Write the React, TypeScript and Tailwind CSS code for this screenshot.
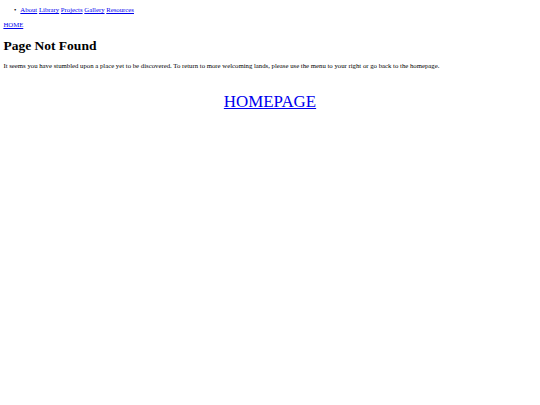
export default function App() {
  const links = ['About', 'Library', 'Projects', 'Gallery', 'Resources']

  return (
    <div className="min-h-[405px] bg-white px-[3.4px] pt-[6px] font-['Liberation_Serif',serif] text-[6.75px] leading-[1.15] text-black">
      <nav>
        <ul className="list-none pl-[10.6px]">
          <li>
            <span className="mr-[4px]">•</span>
            {links.map((link, index) => (
              <span key={link}>
                <a href="#" className="text-[#0000ee] underline">{link}</a>
                {index < links.length - 1 ? ' ' : ''}
              </span>
            ))}
          </li>
        </ul>
      </nav>
      <div className="mt-[7.5px]">
        <a href="#" className="text-[#0000ee] underline">HOME</a>
      </div>
      <h1 className="mt-[9px] text-[13.5px] font-bold leading-[1.15]">Page Not Found</h1>
      <p className="mt-[8.8px]">
        It seems you have stumbled upon a place yet to be discovered. To return to more welcoming lands, please use the menu to your right or go back to the homepage.
      </p>
      <div className="mt-[21.5px] text-center">
        <a href="#" className="text-[16.9px] text-[#0000ee] underline">HOMEPAGE</a>
      </div>
    </div>
  )
}
